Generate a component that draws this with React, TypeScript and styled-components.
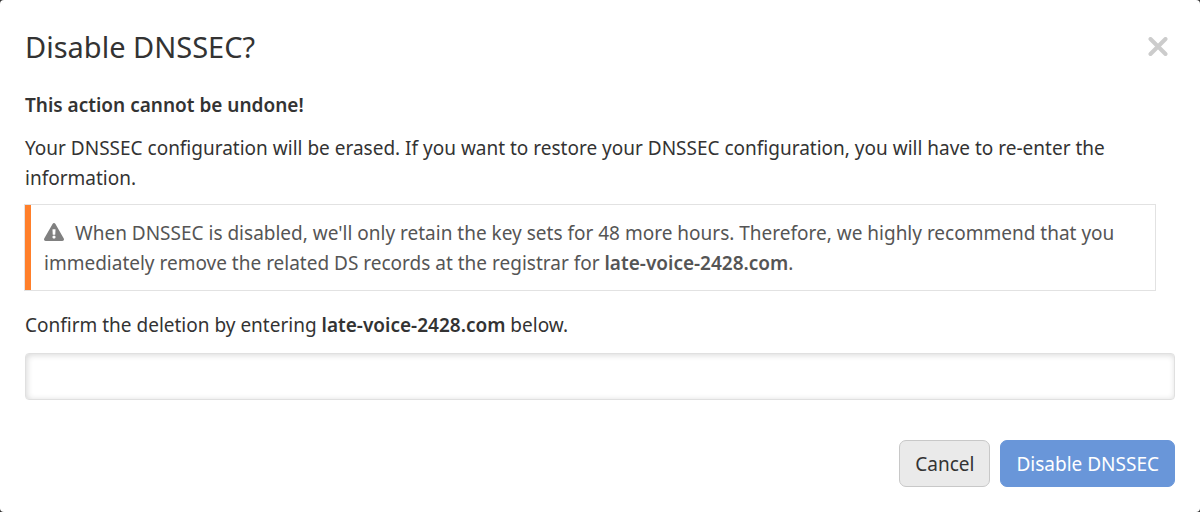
import React, { useState } from "react";
import styled, { createGlobalStyle } from "styled-components";

const GlobalStyle = createGlobalStyle`
  *, *::before, *::after { box-sizing: border-box; }
  body {
    margin: 0;
    background: #333333;
    color: #333333;
    font-family: "Noto Sans", "Open Sans", sans-serif;
    font-size: 19px;
    line-height: 30px;
  }
  button, input { font: inherit; color: inherit; }
`;

const Dialog = styled.form`
  min-height: 100vh;
  padding: 25px;
  background: #ffffff;
  border-radius: 4px;
`;

const Header = styled.header`
  display: flex;
  align-items: center;
  justify-content: space-between;
  margin-bottom: 21px;
`;

const Title = styled.h1`
  margin: 0;
  font-size: 29px;
  font-weight: 400;
  line-height: 44px;
`;

const CloseButton = styled.button`
  display: flex;
  padding: 7px;
  border: 0;
  background: none;
  color: #cccccc;
  cursor: pointer;
`;

const Lead = styled.p`
  margin: 0 0 13px;
`;

const Strong = styled.strong`
  font-weight: 600;
`;

const Text = styled.p`
  margin: 0 0 11px;
`;

const Notice = styled.p`
  margin: 0 19px 19px -1px;
  padding: 13px 19px 12px;
  border: 1px solid #e2e2e2;
  box-shadow: inset 6px 0 0 #ff7f2a;
  color: #555555;
`;

const WarningIcon = styled.svg`
  width: 20px;
  height: 18px;
  margin-right: 11px;
  vertical-align: -1px;
  fill: #808080;
`;

const Label = styled.label`
  display: block;
  margin-bottom: 13px;
`;

const Input = styled.input`
  display: block;
  width: 100%;
  height: 47px;
  padding: 0 12px;
  border: 1px solid #e0e0e0;
  border-radius: 4px;
  background: #ffffff;
  box-shadow: inset 1px 1px 6px rgba(0, 0, 0, 0.16);
`;

const Footer = styled.footer`
  display: flex;
  justify-content: flex-end;
  gap: 10px;
  margin-top: 40px;
`;

const Button = styled.button<{ $primary?: boolean }>`
  height: 47px;
  padding: 0 15px;
  border: 1px solid ${(p) => (p.$primary ? "#6996d9" : "#c8c8c8")};
  border-radius: 7px;
  background: ${(p) => (p.$primary ? "#6996d9" : "#eaeaea")};
  color: ${(p) => (p.$primary ? "#ffffff" : "#333333")};
  cursor: pointer;
`;

const DOMAIN = "late-voice-2428.com";

export default function App() {
  const [value, setValue] = useState("");
  return (
    <>
      <GlobalStyle />
      <Dialog role="dialog" aria-labelledby="title" onSubmit={(e) => e.preventDefault()}>
        <Header>
          <Title id="title">Disable DNSSEC?</Title>
          <CloseButton type="button" aria-label="Close">
            <svg width="20" height="20" viewBox="0 0 20 20" fill="none" stroke="currentColor" strokeWidth="4" strokeLinecap="round">
              <path d="M2.5 2 17.5 17M17.5 2 2.5 17" />
            </svg>
          </CloseButton>
        </Header>
        <Lead>
          <Strong>This action cannot be undone!</Strong>
        </Lead>
        <Text>
          Your DNSSEC configuration will be erased. If you want to restore your DNSSEC configuration, you will have to
          re-enter the information.
        </Text>
        <Notice>
          <WarningIcon viewBox="0 0 576 512" aria-hidden="true">
            <path d="M569.517 440.013C587.975 472.007 564.806 512 527.94 512H48.054c-36.937 0-59.999-40.055-41.577-71.987L246.423 23.985c18.467-32.009 64.72-31.951 83.154 0l239.94 416.028zM288 354c-25.405 0-46 20.595-46 46s20.595 46 46 46 46-20.595 46-46-20.595-46-46-46zm-43.673-165.346l7.418 136c.347 6.364 5.609 11.346 11.982 11.346h48.546c6.373 0 11.635-4.982 11.982-11.346l7.418-136c.375-6.874-5.098-12.654-11.982-12.654h-63.383c-6.884 0-12.356 5.78-11.981 12.654z" />
          </WarningIcon>
          When DNSSEC is disabled, we'll only retain the key sets for 48 more hours. Therefore, we highly recommend that
          you immediately remove the related DS records at the registrar for <Strong>{DOMAIN}</Strong>.
        </Notice>
        <Label htmlFor="confirm">
          Confirm the deletion by entering <Strong>{DOMAIN}</Strong> below.
        </Label>
        <Input id="confirm" type="text" value={value} onChange={(e) => setValue(e.target.value)} />
        <Footer>
          <Button type="button">Cancel</Button>
          <Button type="submit" $primary>
            Disable DNSSEC
          </Button>
        </Footer>
      </Dialog>
    </>
  );
}
